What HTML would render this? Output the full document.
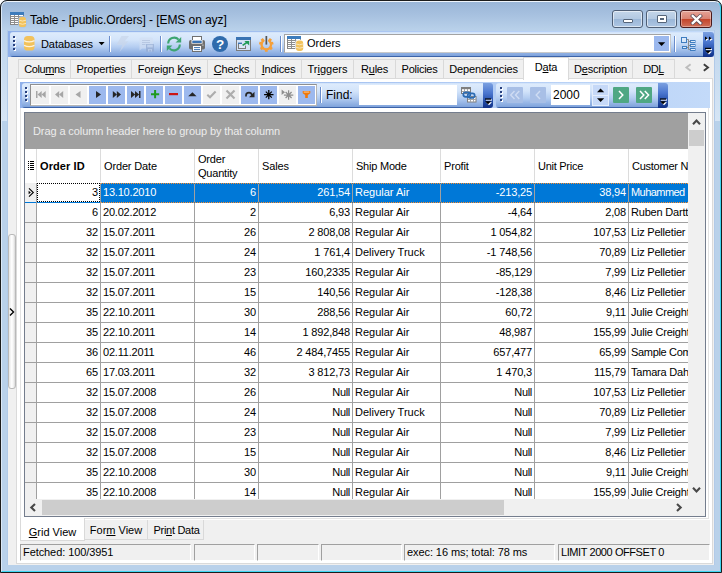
<!DOCTYPE html>
<html><head><meta charset="utf-8"><title>Table - [public.Orders] - [EMS on ayz]</title>
<style>
*{box-sizing:border-box;margin:0;padding:0}
html,body{width:722px;height:573px;overflow:hidden;background:#fff}
body{font-family:"Liberation Sans",sans-serif;font-size:11px;color:#000;position:relative}
.abs,.win *{position:absolute}
.win u{position:static;text-decoration:underline}
.win span,.win b,.win br{position:static}
.win{left:0;top:0;width:722px;height:573px;border-radius:7px 7px 0 0;overflow:hidden;
 background:linear-gradient(#98b4d6 0,#a6c0df 14px,#b9d1ea 30px,#b9d1ea 100%)}
.bd{left:0;top:0;width:722px;height:573px;border:1px solid #1b1b1b;border-radius:7px 7px 0 0;z-index:50;pointer-events:none}
.hl{left:1px;top:1px;width:720px;height:571px;border-radius:6px 6px 0 0;border:1px solid;border-color:#eef4fb #3fd6f2 #3fd6f2 #dbe8f6;pointer-events:none;z-index:49}
.title{left:30px;top:12px;letter-spacing:-0.07px;font-size:12px;line-height:16px;white-space:nowrap;color:#000}
/* caption buttons */
.cb{top:10px;height:18px;border:1px solid #4f5f76;border-radius:3px;background:linear-gradient(#c4d6ea 0,#b3c9e2 48%,#9bb7d8 52%,#adc6e3 100%);box-shadow:inset 0 0 0 1px rgba(255,255,255,.55)}
.cb.close{border-color:#4b1a1c;background:linear-gradient(#e5a397 0,#d98373 48%,#c3452b 52%,#d0705a 100%);box-shadow:inset 0 0 0 1px rgba(255,255,255,.35)}
/* client */
.client{left:8px;top:31px;width:706px;height:534px;background:#f0f0f0}
/* toolbar 1 */
.dock1{left:8px;top:31px;width:706px;height:26px;background:linear-gradient(90deg,#8fb0ea,#c3daf9)}
.tb{border-radius:3px 0 0 3px;background:linear-gradient(#c9ddf8 0,#ddebfc 1px,#d3e4fa 8px,#b4cdf1 15px,#84a7de 23px,#7da1da 24px,#3c63a8 24px,#3c63a8 100%)}
.grip i{left:0;width:2px;height:2px;background:#27407e;box-shadow:1px 1px 0 #fff}
.sep{width:2px;border-left:1px solid #6a8ccb;border-right:1px solid #fff}
.chev{background:linear-gradient(#7ba0e0 0,#4a76cf 40%,#1e46a0 80%,#0f2f86 100%);border-radius:0 3px 3px 0}
/* tabs */
.tab{top:59px;height:20px;border:1px solid #d9d9d9;border-left:none;border-bottom:none;background:#f0f0f0;line-height:18px;text-align:center;white-space:nowrap}
.tab.act{top:57px;height:23px;background:#fff;border-color:#dadada;border-left:1px solid #dadada;line-height:19px;z-index:3}
.page{left:16px;top:78px;width:697px;height:486px;background:#fff;border:1px solid #dadada}
/* nav toolbar */
.dock2{left:20px;top:82px;width:690px;height:26px;background:linear-gradient(90deg,#8fb0ea,#c3daf9)}
.nb{height:18px}
.nb.on{background:#9db9ee}
.nb.off{background:#f0f0f0}
/* grid */
.grid{left:24px;top:112px;width:682px;height:405px;border:1px solid #747d8d;background:#fff;overflow:hidden}
.gin{left:0;top:0;width:663px;height:386px;overflow:hidden;background:#fff}
.grp{left:0;top:0;width:663px;height:36px;background:#a0a0a0;color:#ececec;line-height:36px;padding-left:8px;white-space:nowrap;letter-spacing:-0.1px}
.hdr{left:0;top:36px;width:663px;height:34px;background:#fff}
.hc{top:0;height:33px;padding-left:3px;padding-top:1px;line-height:14px;white-space:nowrap;overflow:hidden;display:flex;align-items:center}
.hc.b{font-weight:bold}
.hs{top:0;width:1px;height:33px;background:#dcdcdc}
.row{left:0;width:760px;height:20px;border-bottom:1px solid #a0a0a0}
.row .ind{left:0;top:0;width:12px;height:19px;background:#f0f0f0}
.c{top:0;height:19px;line-height:19px;white-space:nowrap;overflow:hidden;padding:0 2px}
.c.r{text-align:right}
.row.sel{border-bottom-color:#0078d7}
.row.sel .c{background:#0078d7;color:#fff}
.row.sel .dot{z-index:2;left:76px;width:600px;height:1px;background:repeating-linear-gradient(90deg,#ff8c28 0,#ff8c28 1px,#0078d7 1px,#0078d7 2px)}
.row.sel .c.foc{background:#fff;color:#000;outline:1px dotted #000;outline-offset:-1px}
.vs{top:70px;width:1px;height:330px;background:#a0a0a0}
.vsb{left:663px;top:0;width:17px;height:386px;background:#f0f0f0}
.hsb{left:0;top:386px;width:680px;height:17px;background:#f0f0f0}
/* bottom tabs */
.btab{top:520px;height:20px;border:1px solid #d9d9d9;border-top:none;border-left:none;line-height:20px;text-align:center;white-space:nowrap;background:#f0f0f0}
.btab.act{background:#fff;height:23px;border-left:1px solid #dadada;line-height:29px}
/* status */
.sp{top:544px;height:17px;border:1px solid;border-color:#a0a0a0 #fff #fff #a0a0a0;line-height:15px;padding-left:2px;letter-spacing:-0.08px;white-space:nowrap;overflow:hidden}
</style></head><body>
<div class="win">
<div class="bd"></div><div class="hl"></div>
<div class="title">Table - [public.Orders] - [EMS on ayz]</div>
<div class="cb" style="left:612px;width:31px"><div style="left:10px;top:8px;width:10px;height:4px;background:#fff;border:1px solid #55657a;border-radius:1px"></div></div>
<div class="cb" style="left:646px;width:31px"><div style="left:10px;top:4px;width:10px;height:8px;background:#fff;border:1px solid #55657a;border-radius:1px"></div><div style="left:13px;top:7px;width:4px;height:2px;background:#8aa4c4;border:1px solid #55657a"></div></div>
<div class="cb close" style="left:680px;width:32px"><svg style="left:9px;top:3px" width="13" height="11" viewBox="0 0 13 11"><path d="M2.800 2L10.200 9M10.200 2L2.800 9" stroke="#5a4a55" stroke-width="3.800" stroke-linecap="square"/><path d="M2.800 2L10.200 9M10.200 2L2.800 9" stroke="#fff" stroke-width="2.400" stroke-linecap="square"/></svg></div>

<div style="left:2px;top:30px;width:5px;height:91px;background:linear-gradient(#bdd4ec,#d6e5f5)"></div>
<div style="left:7px;top:30px;width:1px;height:535px;background:#b1cae8"></div>
<div style="left:715px;top:30px;width:5px;height:91px;background:linear-gradient(#bdd4ec,#d6e5f5)"></div>
<div style="left:714px;top:30px;width:1px;height:535px;background:#b1cae8"></div>
<div class="client"></div>
<div class="dock1"></div>
<div class="tb" id="tb1" style="left:10px;top:32px;width:693px;height:25px"></div>
<div class="chev" style="left:703px;top:32px;width:11px;height:25px"></div>
<div class="grip" style="left:13px;top:36px"><i style="top:0"></i><i style="top:4px"></i><i style="top:8px"></i><i style="top:12px"></i></div>
<div style="left:41px;top:38px;line-height:13px;white-space:nowrap;letter-spacing:-0.08px">Databases</div>
<div class="sep" style="left:109px;top:36px;height:16px"></div>
<div class="sep" style="left:160px;top:36px;height:16px"></div>
<div class="sep" style="left:280px;top:36px;height:16px"></div>
<div style="left:284px;top:34px;width:387px;height:19px;background:#fff;border:1px solid;border-color:#a3a3a3 #c9c9c9 #c9c9c9 #a3a3a3"></div>
<div style="left:307px;top:37px;line-height:13px">Orders</div>
<div style="left:654px;top:36px;width:15px;height:15px;background:#9bb8ee"></div>
<div class="sep" style="left:674px;top:36px;height:16px"></div>
<svg class="abs" style="left:0;top:0" width="722" height="60" viewBox="0 0 722 60">
<!-- title icon -->
<g>
 <rect x="10" y="14" width="14" height="11" fill="#868686"/>
 <rect x="11" y="15" width="12" height="9" fill="#fff"/>
 <path d="M11 16.500h12M11 18.500h12M11 20.500h12M11 22.500h12M14.500 15v9M18.500 15v9" stroke="#8e8e8e" stroke-width="1" fill="none"/>
 <rect x="10" y="12" width="14" height="3" fill="#3d7cbc"/>
 <rect x="18.300" y="16.200" width="8.400" height="11.400" rx="3" fill="#a9c4e2"/>
 <rect x="19" y="17" width="7" height="10" rx="2.600" fill="#f2c25c"/>
 <path d="M19 20.200q3.500 1.700 7 0M19 23.400q3.500 1.700 7 0" stroke="#fbe9bf" stroke-width="0.900" fill="none"/>
</g>
<!-- db icon -->
<g>
 <rect x="24" y="36" width="10.500" height="14.500" rx="3.600" fill="#f2c25c"/>
 <path d="M24 40.600q5.250 2.600 10.500 0M24 45.400q5.250 2.600 10.500 0" stroke="#fdf3dc" stroke-width="1.200" fill="none"/>
</g>
<path d="M98.600 42h6L101.600 45.300z" fill="#000"/>
<!-- lightning disabled -->
<path d="M121.500 36H129L124.800 41.200H128.300L119.600 52L122.400 44.800H116.500z" fill="#c9d6ea" opacity=".7"/>
<!-- save disabled -->
<g opacity=".62">
 <path d="M139.500 39q0-1.600 1.600-1.600h10.400q1.600 0 1.600 1.600v7h-7v2.500h-4l-2.600 2z" fill="#d3dff2"/>
 <path d="M142 40.500h8M142 42.500h8M142 44.500h3.500" stroke="#aebcd6" stroke-width="1" fill="none"/>
 <rect x="146" y="44" width="8" height="7.600" fill="#93a8cd"/>
 <rect x="147.200" y="44.800" width="5.600" height="2.600" fill="#c4d2ea"/>
 <rect x="148" y="49" width="4" height="2.600" fill="#c4d2ea"/><rect x="149.400" y="49.800" width="1.400" height="1.800" fill="#93a8cd"/>
</g>
<!-- refresh -->
<g fill="none" stroke="#3da571" stroke-width="2.100">
 <path d="M168.200 43.600A6 6 0 0 1 178.600 39.600"/>
 <path d="M179.800 44.400A6 6 0 0 1 169.400 48.400"/>
</g>
<path d="M181.200 37v5.600h-5.600z" fill="#3da571"/>
<path d="M166.800 51v-5.600h5.600z" fill="#3da571"/>
<!-- printer -->
<g>
 <rect x="189" y="40" width="16" height="9.500" rx="1.800" fill="#6f6f6f"/>
 <rect x="192.500" y="36.500" width="9" height="5" fill="#fff" stroke="#6f6f6f"/>
 <rect x="191.500" y="40" width="11" height="3.600" fill="#fff"/>
 <rect x="192.300" y="40.600" width="9.400" height="2.400" fill="#3a73b3"/>
 <rect x="192.500" y="45.500" width="9" height="6" fill="#fff" stroke="#6f6f6f"/>
 <path d="M194 47.600h6M194 49.600h6" stroke="#3a73b3" stroke-width="1"/>
 <rect x="202.400" y="44.600" width="1" height="1" fill="#fff"/>
</g>
<!-- help -->
<circle cx="220" cy="44" r="8" fill="#2f6bac"/>
<text x="220" y="48.800" text-anchor="middle" font-family="Liberation Sans, sans-serif" font-weight="bold" font-size="13.500" fill="#fff">?</text>
<!-- window icon -->
<g>
 <rect x="236.500" y="37.500" width="14" height="13" fill="#d5e3f7" stroke="#7b7b7b"/>
 <rect x="236" y="37" width="15" height="3" fill="#3a73b3"/>
 <rect x="238.500" y="43.500" width="7" height="5" fill="#dbe7f8" stroke="#7b7b7b"/>
 <rect x="238" y="42.600" width="8" height="1.400" fill="#3a73b3"/>
 <rect x="242" y="40.400" width="7" height="5.200" fill="#d5e3f7"/>
 <path d="M242.600 45.400L247.600 42" stroke="#1f9a55" stroke-width="1.600"/>
 <path d="M244.400 41h4.800v4.600z" fill="#1f9a55"/>
</g>
<!-- gear -->
<g transform="translate(266.300 44.600)">
 <g fill="#f5a03a">
  <rect x="-1.400" y="4" width="2.800" height="3.200"/>
  <rect x="-1.400" y="4" width="2.800" height="3.200" transform="rotate(51.400)"/>
  <rect x="-1.400" y="4" width="2.800" height="3.200" transform="rotate(102.800)"/>
  <rect x="-1.400" y="4" width="2.800" height="3.400" transform="rotate(141)"/>
  <rect x="-1.400" y="4" width="2.800" height="3.200" transform="rotate(-51.400)"/>
  <rect x="-1.400" y="4" width="2.800" height="3.200" transform="rotate(-102.800)"/>
  <rect x="-1.400" y="4" width="2.800" height="3.400" transform="rotate(-141)"/>
 </g>
 <path d="M-2.400 -4.100A4.750 4.750 0 1 0 2.400 -4.100" fill="none" stroke="#f5a03a" stroke-width="2.300"/>
 <rect x="-0.800" y="-8.600" width="1.700" height="8.600" fill="#555"/>
</g>
<!-- table icon (combo) -->
<g>
 <rect x="287" y="38" width="14" height="11" fill="#868686"/>
 <rect x="288" y="39" width="12" height="9" fill="#fff"/>
 <path d="M288 40.500h12M288 42.500h12M288 44.500h12M288 46.500h12M291.500 39v9M295.500 39v9" stroke="#8e8e8e" stroke-width="1" fill="none"/>
 <rect x="287" y="36" width="14" height="3" fill="#3d7cbc"/>
 <rect x="295.300" y="39.700" width="8.400" height="11.800" rx="3" fill="#fff"/>
 <rect x="296" y="40.500" width="7.200" height="10.500" rx="2.700" fill="#f2c25c"/>
 <path d="M296 43.900q3.600 1.700 7.200 0M296 47.300q3.600 1.700 7.200 0" stroke="#fbe9bf" stroke-width="0.900" fill="none"/>
</g>
<path d="M658 42.300h7.200L661.600 46z" fill="#000"/>
<!-- tree icon -->
<g fill="#dce9fa" stroke="#3f7dc0" stroke-width="1">
 <rect x="681.500" y="37.500" width="5" height="5"/>
 <rect x="690.500" y="40.500" width="4.500" height="2"/>
 <rect x="690.500" y="44.500" width="4.500" height="2"/>
 <rect x="690.500" y="48.500" width="4.500" height="2"/>
 <rect x="682.500" y="46.500" width="4" height="2"/>
</g>
<path d="M687 39.500h1.500v10h2M688.500 41.500h2M688.500 45.500h2M687 47.500h1.500" fill="none" stroke="#8d8d8d" stroke-width="1"/>
<!-- chevron marks -->
<g>
 <path d="M706 37.400l2.600 1.800l-2.600 1.800zM710 37.400l2.600 1.800l-2.600 1.800z" fill="#fff"/>
 <path d="M705 36.400l2.600 1.800l-2.600 1.800zM709 36.400l2.600 1.800l-2.600 1.800z" fill="#000"/>
 <rect x="706" y="48.800" width="6" height="1.300" fill="#fff"/><path d="M706 51.600h6l-3 3z" fill="#fff"/>
 <rect x="705" y="47.800" width="6" height="1.300" fill="#000"/><path d="M705 50.600h6l-3 3z" fill="#000"/>
</g>
</svg>

<div class="tab" style="left:18px;width:1px;border-left:1px solid #d9d9d9;border-right:none"></div>
<div class="tab" style="left:19px;width:52px;letter-spacing:-0.4px">Colu<u>m</u>ns</div>
<div class="tab" style="left:71px;width:61px;letter-spacing:-0.1px">Properties</div>
<div class="tab" style="left:132px;width:76px;letter-spacing:-0.13px">Foreign <u>K</u>eys</div>
<div class="tab" style="left:208px;width:48px;letter-spacing:-0.2px"><u>C</u>hecks</div>
<div class="tab" style="left:256px;width:46px;letter-spacing:-0.17px"><u>I</u>ndices</div>
<div class="tab" style="left:302px;width:52px;letter-spacing:0px">Tr<u>i</u>ggers</div>
<div class="tab" style="left:354px;width:42px;letter-spacing:-0.24px">R<u>u</u>les</div>
<div class="tab" style="left:396px;width:48px;letter-spacing:-0.25px">Policies</div>
<div class="tab" style="left:444px;width:80px;letter-spacing:-0.14px">Dependencies</div>
<div class="tab act" style="left:523px;width:46px;letter-spacing:-0.2px">D<u>a</u>ta</div>
<div class="tab" style="left:569px;width:64px;letter-spacing:-0.17px">D<u>e</u>scription</div>
<div class="tab" style="left:633px;width:42px;letter-spacing:-0.5px">DD<u>L</u></div>
<div class="page"></div>
<div class="dock2"></div>
<div class="tb" style="left:22px;top:83px;width:461px;height:25px"></div>
<div class="chev" style="left:483px;top:83px;width:10px;height:25px"></div>
<div class="grip" style="left:25px;top:87px"><i style="top:0"></i><i style="top:4px"></i><i style="top:8px"></i><i style="top:12px"></i></div>
<div style="left:30px;top:84px;width:287px;height:22px;background:#fff;border:1px solid;border-color:#8f8f8f #b5b5b5 #b5b5b5 #8f8f8f"></div>
<div class="nb off" style="left:31px;top:86px;width:18px"></div>
<div class="nb off" style="left:51px;top:86px;width:17px"></div>
<div class="nb off" style="left:70px;top:86px;width:17px"></div>
<div class="nb on" style="left:89px;top:86px;width:17px"></div>
<div class="nb on" style="left:108px;top:86px;width:17px"></div>
<div class="nb on" style="left:127px;top:86px;width:17px"></div>
<div class="nb on" style="left:146px;top:86px;width:17px"></div>
<div class="nb on" style="left:165px;top:86px;width:17px"></div>
<div class="nb on" style="left:184px;top:86px;width:17px"></div>
<div class="nb off" style="left:203px;top:86px;width:17px"></div>
<div class="nb off" style="left:222px;top:86px;width:17px"></div>
<div class="nb on" style="left:241px;top:86px;width:17px"></div>
<div class="nb on" style="left:260px;top:86px;width:17px"></div>
<div class="nb off" style="left:279px;top:86px;width:17px"></div>
<div class="nb on" style="left:298px;top:86px;width:17px"></div>
<svg class="abs" style="left:0;top:0" width="330" height="110" viewBox="0 0 330 110"><rect x="36" y="91" width="1.500" height="7" fill="#a6a6a6"/><path d="M41.7 91L37.5 94.5L41.7 98z" fill="#a6a6a6"/><path d="M45.7 91L41.5 94.5L45.7 98z" fill="#a6a6a6"/><path d="M59.2 91L55 94.5L59.2 98z" fill="#a6a6a6"/><path d="M63.2 91L59 94.5L63.2 98z" fill="#a6a6a6"/><path d="M80.5 91L75.5 94.5L80.5 98z" fill="#a6a6a6"/><path d="M96 91L101 94.5L96 98z" fill="#262626"/><path d="M112.8 91L117.0 94.5L112.8 98z" fill="#262626"/><path d="M116.8 91L121.0 94.5L116.8 98z" fill="#262626"/><path d="M131 91L135.2 94.5L131 98z" fill="#262626"/><path d="M135 91L139.2 94.5L135 98z" fill="#262626"/><rect x="139" y="91" width="1.500" height="7" fill="#262626"/><path d="M151 94.200h8.200M155.100 90.100v8.200" stroke="#1f9a1f" stroke-width="2" fill="none"/><rect x="169" y="93" width="9" height="2.200" fill="#cc1414"/><path d="M188.200 96.200L192.400 92.200L196.600 96.200z" fill="#262626"/><path d="M207.300 94.800L210 97.200L215.600 91.600" stroke="#adadad" stroke-width="2.100" fill="none"/><path d="M226.500 90.500L234.500 98.500M234.500 90.500L226.500 98.500" stroke="#adadad" stroke-width="2.200" fill="none"/><path d="M246 96.500V95.500Q246 92.700 249 92.700Q251.600 92.700 251.800 95" stroke="#262626" stroke-width="1.700" fill="none"/><path d="M248.600 94.200L254.400 94.200L254.400 91.600L254.400 97.400L249.800 97.400z" fill="#262626" opacity="0"/><path d="M249.200 94.600H254.600V90.800zM254.600 94.600" fill="#262626" opacity="0"/><path d="M249 97.200L254.500 97.200L254.500 91.800z" fill="#262626"/><path d="M264.10 94.60L273.50 94.60M265.81 91.61L271.79 97.59M268.80 89.90L268.80 99.30M271.79 91.61L265.81 97.59" stroke="#000" stroke-width="1.25" fill="none"/><path d="M283.90 95.00L293.30 95.00M285.61 92.01L291.59 97.99M288.60 90.30L288.60 99.70M291.59 92.01L285.61 97.99" stroke="#8e8e8e" stroke-width="1.25" fill="none"/><path d="M281.600 89.600L281.600 95L285 92.300z" fill="#8e8e8e"/><path d="M302.700 91h7.600v2.200l-2.500 1.800v3h-2.600v-3l-2.500 -1.800z" fill="#f0780a"/><rect x="303.700" y="91.600" width="5.600" height="0.900" fill="#ffd9a8"/></svg>
<div class="sep" style="left:320px;top:87px;height:16px"></div>
<div style="left:326px;top:88px;font-size:12px;line-height:14px">Find:</div>
<div style="left:359px;top:85px;width:98px;height:20px;background:#fff"></div>
<div class="tb" style="left:496px;top:83px;width:162px;height:25px"></div>
<div class="chev" style="left:658px;top:83px;width:10px;height:25px"></div>
<div class="grip" style="left:500px;top:87px"><i style="top:0"></i><i style="top:4px"></i><i style="top:8px"></i><i style="top:12px"></i></div>
<div style="left:507px;top:87px;width:16px;height:16px;background:#a8bfe6;border-radius:1px"></div>
<div style="left:530px;top:87px;width:16px;height:16px;background:#a8bfe6;border-radius:1px"></div>
<div style="left:551px;top:85px;width:39px;height:20px;background:#fff"></div>
<div style="left:553px;top:88px;font-size:12px;line-height:14px">2000</div>
<div style="left:592px;top:84px;width:17px;height:22px;background:#c6d9f8;border:1px solid #e4eefc"></div>
<div style="left:593px;top:95px;width:15px;height:1px;background:#e4eefc"></div>
<div style="left:613px;top:87px;width:16px;height:16px;background:#4fa783;border-radius:1px"></div>
<div style="left:636px;top:87px;width:16px;height:16px;background:#4fa783;border-radius:1px"></div>
<svg class="abs" style="left:440px;top:80px" width="240" height="30" viewBox="440 80 240 30">
<!-- link icon -->
<g>
 <rect x="461.500" y="87.500" width="9" height="6" fill="#fff" stroke="#7f7f7f"/><rect x="461" y="87" width="10" height="2.200" fill="#7f7f7f"/>
 <path d="M464.500 89v5M467.500 89v5M462 91.500h8" stroke="#a5a5a5" stroke-width="1"/>
 <rect x="467.500" y="96.500" width="8.500" height="5.500" fill="#fff" stroke="#7f7f7f"/>
 <path d="M470.500 96v6M473.500 96v6M468 99.500h8" stroke="#a5a5a5" stroke-width="1"/>
 <rect x="463.300" y="92.300" width="7" height="4.600" rx="2.300" fill="none" stroke="#2c6bb2" stroke-width="1.700"/>
 <rect x="467.700" y="93.300" width="7" height="4.600" rx="2.300" fill="none" stroke="#2c6bb2" stroke-width="1.700"/>
</g>
<!-- chevron B -->
<rect x="486" y="99.400" width="6" height="1.200" fill="#fff"/><path d="M486 102.200h6l-3 3z" fill="#fff"/>
<rect x="485" y="98.400" width="6" height="1.200" fill="#000"/><path d="M485 101.200h6l-3 3z" fill="#000"/>
<!-- chevron C -->
<rect x="661" y="99.400" width="6" height="1.200" fill="#fff"/><path d="M661 102.200h6l-3 3z" fill="#fff"/>
<rect x="660" y="98.400" width="6" height="1.200" fill="#000"/><path d="M660 101.200h6l-3 3z" fill="#000"/>
<!-- << -->
<path d="M514.500 91L510.700 95L514.500 99M519.300 91L515.500 95L519.300 99" fill="none" stroke="#cfdcf3" stroke-width="1.400"/>
<!-- < -->
<path d="M540 91L536.200 95L540 99" fill="none" stroke="#cfdcf3" stroke-width="1.400"/>
<!-- > -->
<path d="M619 91L622.800 95L619 99" fill="none" stroke="#fff" stroke-width="1.500"/>
<!-- >> -->
<path d="M640 91L643.800 95L640 99M644.800 91L648.600 95L644.800 99" fill="none" stroke="#fff" stroke-width="1.500"/>
<!-- spin -->
<path d="M597 92.300L600.600 88.600L604.200 92.300z" fill="#000"/>
<path d="M597 98.200L600.600 101.900L604.200 98.200z" fill="#000"/>
</svg>

<div class="grid">
 <div class="gin">
  <div class="grp">Drag a column header here to group by that column</div>
  <div class="hdr">
<div class="hs" style="left:11px"></div>
<div class="hc b" style="left:12px;width:63px;letter-spacing:0.1px"><span>Order ID</span></div>
<div class="hs" style="left:75px"></div>
<div class="hc" style="left:76px;width:93px;letter-spacing:-0.15px"><span>Order Date</span></div>
<div class="hs" style="left:169px"></div>
<div class="hc" style="left:170px;width:63px;letter-spacing:-0.2px"><span>Order<br>Quantity</span></div>
<div class="hs" style="left:233px"></div>
<div class="hc" style="left:234px;width:93px;letter-spacing:-0.13px"><span>Sales</span></div>
<div class="hs" style="left:327px"></div>
<div class="hc" style="left:328px;width:87px;letter-spacing:-0.22px"><span>Ship Mode</span></div>
<div class="hs" style="left:415px"></div>
<div class="hc" style="left:416px;width:93px;letter-spacing:-0.17px"><span>Profit</span></div>
<div class="hs" style="left:509px"></div>
<div class="hc" style="left:510px;width:93px;letter-spacing:-0.27px"><span>Unit Price</span></div>
<div class="hs" style="left:603px"></div>
<div class="hc" style="left:604px;width:131px;letter-spacing:-0.25px"><span>Customer N</span></div>
<div class="hs" style="left:735px"></div>
  </div>
<div class="row sel" style="top:70px">
<div class="ind"></div>
<div class="c" style="left:75px;width:600px;height:20px"></div><div class="dot" style="top:0"></div><div class="dot" style="top:19px"></div>
<div class="c r foc" style="left:12px;width:63px;letter-spacing:-0.15px">3</div>
<div class="c l" style="left:76px;width:93px;letter-spacing:-0.2px">13.10.2010</div>
<div class="c r" style="left:170px;width:63px;letter-spacing:-0.15px">6</div>
<div class="c r" style="left:234px;width:93px;letter-spacing:-0.15px">261,54</div>
<div class="c l" style="left:328px;width:87px">Regular Air</div>
<div class="c r" style="left:416px;width:93px;letter-spacing:-0.15px">-213,25</div>
<div class="c r" style="left:510px;width:93px;letter-spacing:-0.15px">38,94</div>
<div class="c l" style="left:604px;width:131px;letter-spacing:-0.55px">Muhammed</div>
</div>
<div class="row" style="top:90px">
<div class="ind"></div>
<div class="c r" style="left:12px;width:63px;letter-spacing:-0.15px">6</div>
<div class="c l" style="left:76px;width:93px;letter-spacing:-0.2px">20.02.2012</div>
<div class="c r" style="left:170px;width:63px;letter-spacing:-0.15px">2</div>
<div class="c r" style="left:234px;width:93px;letter-spacing:-0.15px">6,93</div>
<div class="c l" style="left:328px;width:87px">Regular Air</div>
<div class="c r" style="left:416px;width:93px;letter-spacing:-0.15px">-4,64</div>
<div class="c r" style="left:510px;width:93px;letter-spacing:-0.15px">2,08</div>
<div class="c l" style="left:604px;width:131px;letter-spacing:-0.2px">Ruben Dartt</div>
</div>
<div class="row" style="top:110px">
<div class="ind"></div>
<div class="c r" style="left:12px;width:63px;letter-spacing:-0.15px">32</div>
<div class="c l" style="left:76px;width:93px;letter-spacing:-0.2px">15.07.2011</div>
<div class="c r" style="left:170px;width:63px;letter-spacing:-0.15px">26</div>
<div class="c r" style="left:234px;width:93px;letter-spacing:-0.15px">2 808,08</div>
<div class="c l" style="left:328px;width:87px">Regular Air</div>
<div class="c r" style="left:416px;width:93px;letter-spacing:-0.15px">1 054,82</div>
<div class="c r" style="left:510px;width:93px;letter-spacing:-0.15px">107,53</div>
<div class="c l" style="left:604px;width:131px;letter-spacing:-0.2px">Liz Pelletier</div>
</div>
<div class="row" style="top:130px">
<div class="ind"></div>
<div class="c r" style="left:12px;width:63px;letter-spacing:-0.15px">32</div>
<div class="c l" style="left:76px;width:93px;letter-spacing:-0.2px">15.07.2011</div>
<div class="c r" style="left:170px;width:63px;letter-spacing:-0.15px">24</div>
<div class="c r" style="left:234px;width:93px;letter-spacing:-0.15px">1 761,4</div>
<div class="c l" style="left:328px;width:87px">Delivery Truck</div>
<div class="c r" style="left:416px;width:93px;letter-spacing:-0.15px">-1 748,56</div>
<div class="c r" style="left:510px;width:93px;letter-spacing:-0.15px">70,89</div>
<div class="c l" style="left:604px;width:131px;letter-spacing:-0.2px">Liz Pelletier</div>
</div>
<div class="row" style="top:150px">
<div class="ind"></div>
<div class="c r" style="left:12px;width:63px;letter-spacing:-0.15px">32</div>
<div class="c l" style="left:76px;width:93px;letter-spacing:-0.2px">15.07.2011</div>
<div class="c r" style="left:170px;width:63px;letter-spacing:-0.15px">23</div>
<div class="c r" style="left:234px;width:93px;letter-spacing:-0.15px">160,2335</div>
<div class="c l" style="left:328px;width:87px">Regular Air</div>
<div class="c r" style="left:416px;width:93px;letter-spacing:-0.15px">-85,129</div>
<div class="c r" style="left:510px;width:93px;letter-spacing:-0.15px">7,99</div>
<div class="c l" style="left:604px;width:131px;letter-spacing:-0.2px">Liz Pelletier</div>
</div>
<div class="row" style="top:170px">
<div class="ind"></div>
<div class="c r" style="left:12px;width:63px;letter-spacing:-0.15px">32</div>
<div class="c l" style="left:76px;width:93px;letter-spacing:-0.2px">15.07.2011</div>
<div class="c r" style="left:170px;width:63px;letter-spacing:-0.15px">15</div>
<div class="c r" style="left:234px;width:93px;letter-spacing:-0.15px">140,56</div>
<div class="c l" style="left:328px;width:87px">Regular Air</div>
<div class="c r" style="left:416px;width:93px;letter-spacing:-0.15px">-128,38</div>
<div class="c r" style="left:510px;width:93px;letter-spacing:-0.15px">8,46</div>
<div class="c l" style="left:604px;width:131px;letter-spacing:-0.2px">Liz Pelletier</div>
</div>
<div class="row" style="top:190px">
<div class="ind"></div>
<div class="c r" style="left:12px;width:63px;letter-spacing:-0.15px">35</div>
<div class="c l" style="left:76px;width:93px;letter-spacing:-0.2px">22.10.2011</div>
<div class="c r" style="left:170px;width:63px;letter-spacing:-0.15px">30</div>
<div class="c r" style="left:234px;width:93px;letter-spacing:-0.15px">288,56</div>
<div class="c l" style="left:328px;width:87px">Regular Air</div>
<div class="c r" style="left:416px;width:93px;letter-spacing:-0.15px">60,72</div>
<div class="c r" style="left:510px;width:93px;letter-spacing:-0.15px">9,11</div>
<div class="c l" style="left:604px;width:131px;letter-spacing:-0.2px">Julie Creight</div>
</div>
<div class="row" style="top:210px">
<div class="ind"></div>
<div class="c r" style="left:12px;width:63px;letter-spacing:-0.15px">35</div>
<div class="c l" style="left:76px;width:93px;letter-spacing:-0.2px">22.10.2011</div>
<div class="c r" style="left:170px;width:63px;letter-spacing:-0.15px">14</div>
<div class="c r" style="left:234px;width:93px;letter-spacing:-0.15px">1 892,848</div>
<div class="c l" style="left:328px;width:87px">Regular Air</div>
<div class="c r" style="left:416px;width:93px;letter-spacing:-0.15px">48,987</div>
<div class="c r" style="left:510px;width:93px;letter-spacing:-0.15px">155,99</div>
<div class="c l" style="left:604px;width:131px;letter-spacing:-0.2px">Julie Creight</div>
</div>
<div class="row" style="top:230px">
<div class="ind"></div>
<div class="c r" style="left:12px;width:63px;letter-spacing:-0.15px">36</div>
<div class="c l" style="left:76px;width:93px;letter-spacing:-0.2px">02.11.2011</div>
<div class="c r" style="left:170px;width:63px;letter-spacing:-0.15px">46</div>
<div class="c r" style="left:234px;width:93px;letter-spacing:-0.15px">2 484,7455</div>
<div class="c l" style="left:328px;width:87px">Regular Air</div>
<div class="c r" style="left:416px;width:93px;letter-spacing:-0.15px">657,477</div>
<div class="c r" style="left:510px;width:93px;letter-spacing:-0.15px">65,99</div>
<div class="c l" style="left:604px;width:131px;letter-spacing:-0.32px">Sample Com</div>
</div>
<div class="row" style="top:250px">
<div class="ind"></div>
<div class="c r" style="left:12px;width:63px;letter-spacing:-0.15px">65</div>
<div class="c l" style="left:76px;width:93px;letter-spacing:-0.2px">17.03.2011</div>
<div class="c r" style="left:170px;width:63px;letter-spacing:-0.15px">32</div>
<div class="c r" style="left:234px;width:93px;letter-spacing:-0.15px">3 812,73</div>
<div class="c l" style="left:328px;width:87px">Regular Air</div>
<div class="c r" style="left:416px;width:93px;letter-spacing:-0.15px">1 470,3</div>
<div class="c r" style="left:510px;width:93px;letter-spacing:-0.15px">115,79</div>
<div class="c l" style="left:604px;width:131px;letter-spacing:-0.2px">Tamara Dah</div>
</div>
<div class="row" style="top:270px">
<div class="ind"></div>
<div class="c r" style="left:12px;width:63px;letter-spacing:-0.15px">32</div>
<div class="c l" style="left:76px;width:93px;letter-spacing:-0.2px">15.07.2008</div>
<div class="c r" style="left:170px;width:63px;letter-spacing:-0.15px">26</div>
<div class="c r" style="left:234px;width:93px;letter-spacing:-0.3px">Null</div>
<div class="c l" style="left:328px;width:87px">Regular Air</div>
<div class="c r" style="left:416px;width:93px;letter-spacing:-0.3px">Null</div>
<div class="c r" style="left:510px;width:93px;letter-spacing:-0.15px">107,53</div>
<div class="c l" style="left:604px;width:131px;letter-spacing:-0.2px">Liz Pelletier</div>
</div>
<div class="row" style="top:290px">
<div class="ind"></div>
<div class="c r" style="left:12px;width:63px;letter-spacing:-0.15px">32</div>
<div class="c l" style="left:76px;width:93px;letter-spacing:-0.2px">15.07.2008</div>
<div class="c r" style="left:170px;width:63px;letter-spacing:-0.15px">24</div>
<div class="c r" style="left:234px;width:93px;letter-spacing:-0.3px">Null</div>
<div class="c l" style="left:328px;width:87px">Delivery Truck</div>
<div class="c r" style="left:416px;width:93px;letter-spacing:-0.3px">Null</div>
<div class="c r" style="left:510px;width:93px;letter-spacing:-0.15px">70,89</div>
<div class="c l" style="left:604px;width:131px;letter-spacing:-0.2px">Liz Pelletier</div>
</div>
<div class="row" style="top:310px">
<div class="ind"></div>
<div class="c r" style="left:12px;width:63px;letter-spacing:-0.15px">32</div>
<div class="c l" style="left:76px;width:93px;letter-spacing:-0.2px">15.07.2008</div>
<div class="c r" style="left:170px;width:63px;letter-spacing:-0.15px">23</div>
<div class="c r" style="left:234px;width:93px;letter-spacing:-0.3px">Null</div>
<div class="c l" style="left:328px;width:87px">Regular Air</div>
<div class="c r" style="left:416px;width:93px;letter-spacing:-0.3px">Null</div>
<div class="c r" style="left:510px;width:93px;letter-spacing:-0.15px">7,99</div>
<div class="c l" style="left:604px;width:131px;letter-spacing:-0.2px">Liz Pelletier</div>
</div>
<div class="row" style="top:330px">
<div class="ind"></div>
<div class="c r" style="left:12px;width:63px;letter-spacing:-0.15px">32</div>
<div class="c l" style="left:76px;width:93px;letter-spacing:-0.2px">15.07.2008</div>
<div class="c r" style="left:170px;width:63px;letter-spacing:-0.15px">15</div>
<div class="c r" style="left:234px;width:93px;letter-spacing:-0.3px">Null</div>
<div class="c l" style="left:328px;width:87px">Regular Air</div>
<div class="c r" style="left:416px;width:93px;letter-spacing:-0.3px">Null</div>
<div class="c r" style="left:510px;width:93px;letter-spacing:-0.15px">8,46</div>
<div class="c l" style="left:604px;width:131px;letter-spacing:-0.2px">Liz Pelletier</div>
</div>
<div class="row" style="top:350px">
<div class="ind"></div>
<div class="c r" style="left:12px;width:63px;letter-spacing:-0.15px">35</div>
<div class="c l" style="left:76px;width:93px;letter-spacing:-0.2px">22.10.2008</div>
<div class="c r" style="left:170px;width:63px;letter-spacing:-0.15px">30</div>
<div class="c r" style="left:234px;width:93px;letter-spacing:-0.3px">Null</div>
<div class="c l" style="left:328px;width:87px">Regular Air</div>
<div class="c r" style="left:416px;width:93px;letter-spacing:-0.3px">Null</div>
<div class="c r" style="left:510px;width:93px;letter-spacing:-0.15px">9,11</div>
<div class="c l" style="left:604px;width:131px;letter-spacing:-0.2px">Julie Creight</div>
</div>
<div class="row" style="top:370px">
<div class="ind"></div>
<div class="c r" style="left:12px;width:63px;letter-spacing:-0.15px">35</div>
<div class="c l" style="left:76px;width:93px;letter-spacing:-0.2px">22.10.2008</div>
<div class="c r" style="left:170px;width:63px;letter-spacing:-0.15px">14</div>
<div class="c r" style="left:234px;width:93px;letter-spacing:-0.3px">Null</div>
<div class="c l" style="left:328px;width:87px">Regular Air</div>
<div class="c r" style="left:416px;width:93px;letter-spacing:-0.3px">Null</div>
<div class="c r" style="left:510px;width:93px;letter-spacing:-0.15px">155,99</div>
<div class="c l" style="left:604px;width:131px;letter-spacing:-0.2px">Julie Creight</div>
</div>
<div class="vs" style="left:11px"></div>
<div class="vs" style="left:75px"></div>
<div class="vs" style="left:169px"></div>
<div class="vs" style="left:233px"></div>
<div class="vs" style="left:327px"></div>
<div class="vs" style="left:415px"></div>
<div class="vs" style="left:509px"></div>
<div class="vs" style="left:603px"></div>
 </div>
 <div class="vsb"><div style="left:1px;top:17px;width:15px;height:16px;background:#cdcdcd"></div>
 <svg style="left:4px;top:5px" width="9" height="8" viewBox="0 0 9 8"><path d="M1 6.300L4.500 2.600L8 6.300" fill="none" stroke="#484848" stroke-width="2.100"/></svg>
 <svg style="left:4px;top:373px" width="9" height="8" viewBox="0 0 9 8"><path d="M1 1.700L4.500 5.400L8 1.700" fill="none" stroke="#484848" stroke-width="2.100"/></svg></div>
 <div class="hsb"><div style="left:17px;top:1px;width:462px;height:15px;background:#cdcdcd"></div>
 <svg style="left:4px;top:4px" width="8" height="9" viewBox="0 0 8 9"><path d="M6 1L2.300 4.500L6 8" fill="none" stroke="#484848" stroke-width="2.100"/></svg>
 <svg style="left:650px;top:4px" width="8" height="9" viewBox="0 0 8 9"><path d="M2 1L5.700 4.500L2 8" fill="none" stroke="#484848" stroke-width="2.100"/></svg></div>
</div>
<svg class="abs" style="left:20px;top:56px;z-index:5;pointer-events:none" width="700" height="150" viewBox="20 56 700 150">
<path d="M690.600 64.300L686.400 67.500L690.600 70.700" fill="none" stroke="#bdbdbd" stroke-width="1.900"/>
<path d="M703.800 64.300L708 67.500L703.800 70.700" fill="none" stroke="#3c3c3c" stroke-width="1.900"/>
<g fill="#000"><rect x="28" y="161" width="1" height="1"/><rect x="28" y="163" width="1" height="1"/><rect x="28" y="165" width="1" height="1"/><rect x="28" y="167" width="1" height="1"/><rect x="28" y="169" width="1" height="1"/>
<rect x="30" y="161" width="4" height="1"/><rect x="30" y="163" width="4" height="1"/><rect x="30" y="165" width="4" height="1"/><rect x="30" y="167" width="4" height="1"/><rect x="30" y="169" width="4" height="1"/></g>
<path d="M29 188.400L33.300 192.500L29 196.600" fill="none" stroke="#000" stroke-width="1.100"/><path d="M28.600 190.800v3.400l2.200-1.700z" fill="#000"/>
</svg>
<div style="left:20px;top:108px;width:689px;height:411px;border:1px solid #e3e3e3;border-top:none"></div>
<div style="left:20px;top:520px;width:690px;height:24px;background:#f0f0f0"></div>
<div class="btab act" style="left:20px;top:518px;width:65px"><u>G</u>rid View</div>
<div class="btab" style="left:85px;width:63px">For<u>m</u> View</div>
<div class="btab" style="left:148px;width:56px;letter-spacing:-0.3px;padding-left:2px">Pri<u>n</u>t Data</div>
<div style="left:20px;top:544px;width:690px;height:16px;background:#f0f0f0"></div>
<div class="sp" style="left:20px;width:171px">Fetched: 100/3951</div>
<div class="sp" style="left:194px;width:61px"></div>
<div class="sp" style="left:257px;width:62px"></div>
<div class="sp" style="left:321px;width:81px"></div>
<div class="sp" style="left:404px;width:151px">exec: 16 ms; total: 78 ms</div>
<div class="sp" style="left:558px;width:152px;letter-spacing:-0.42px">LIMIT 2000 OFFSET 0</div>
<!-- splitter handle -->
<div style="left:8px;top:234px;width:8px;height:155px;border:1px solid #b9b9b9;border-radius:3px;background:linear-gradient(90deg,#e4e4e4 0,#ffffff 45%,#f4f4f4 70%,#d8d8d8 100%)"></div>
<svg class="abs" style="left:8px;top:307px" width="8" height="10" viewBox="0 0 8 10"><path d="M2 1.500L5.500 5L2 8.500" fill="none" stroke="#000" stroke-width="1.400"/></svg>

</div>
</body></html>
